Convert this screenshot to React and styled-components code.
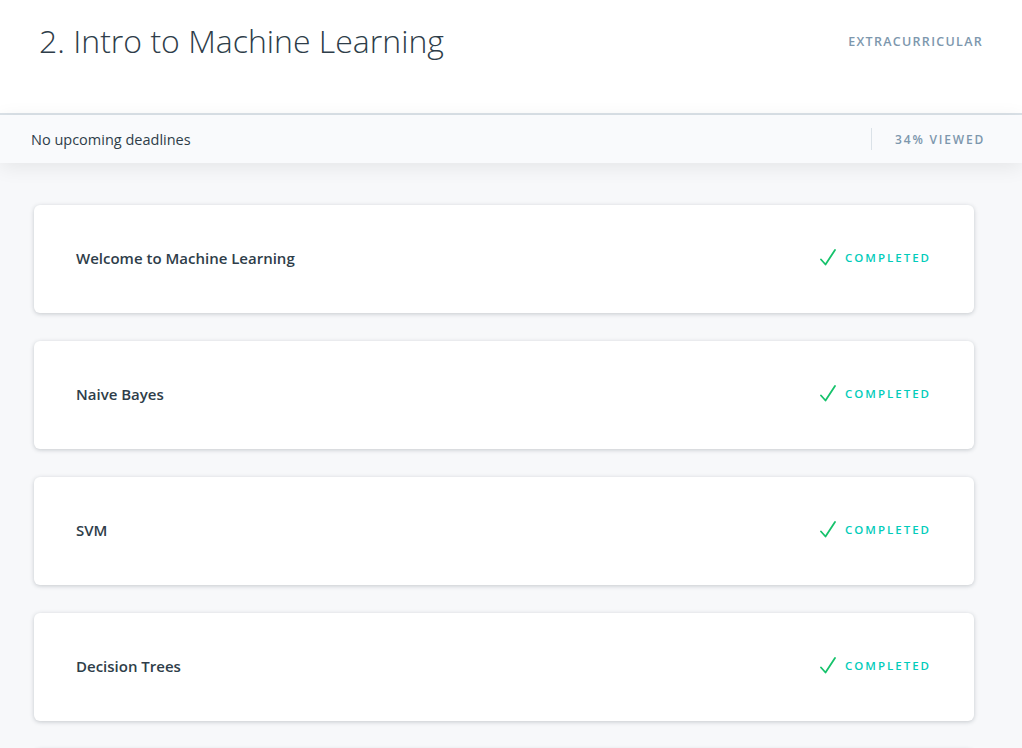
import styled, { createGlobalStyle } from 'styled-components';

const GlobalStyle = createGlobalStyle`
    html, body {
        margin: 0;
        padding: 0;
        background: #f7f8fa;
        font-family: 'Open Sans', 'Noto Sans', sans-serif;
        -webkit-font-smoothing: antialiased;
    }
`;

const Header = styled.header`
    height: 113px;
    background: #fff;
    border-bottom: 2px solid #dbe2e8;
    display: flex;
    justify-content: space-between;
    align-items: flex-start;
    padding: 0 39px 0 39px;
`;

const Title = styled.h1`
    margin: 19px 0 0;
    font-size: 32px;
    font-weight: 300;
    color: #2e3d49;
`;

const Tag = styled.span`
    margin-top: 33px;
    font-size: 12.5px;
    font-weight: 600;
    letter-spacing: 1.3px;
    color: #7d97ad;
    text-transform: uppercase;
`;

const SubBar = styled.div`
    height: 48px;
    background: #f9fafc;
    display: flex;
    align-items: center;
    padding: 0 37px 0 31px;
    box-shadow: 0 4px 20px rgba(0, 0, 0, 0.08);
    position: relative;
`;

const Deadline = styled.span`
    flex: 1;
    font-size: 14.5px;
    color: #2e3d49;
`;

const Viewed = styled.span`
    border-left: 1px solid #dbe2e8;
    padding-left: 23px;
    height: 22px;
    display: flex;
    align-items: center;
    font-size: 12px;
    font-weight: 600;
    letter-spacing: 1.8px;
    color: #7d97ad;
`;

const List = styled.main`
    display: flex;
    flex-direction: column;
    gap: 28px;
    padding: 42px 48px 40px 34px;
`;

const Card = styled.div`
    height: 108px;
    background: #fff;
    border-radius: 6px;
    box-shadow: 0 1px 4px rgba(46, 61, 73, 0.25);
    display: flex;
    align-items: center;
    justify-content: space-between;
    padding: 0 43px 0 42px;
`;

const CardTitle = styled.span`
    margin-top: -2px;
    font-size: 15px;
    font-weight: 600;
    color: #2e3d49;
`;

const Status = styled.span`
    display: flex;
    align-items: center;
    gap: 9px;
    margin-top: -4px;
    font-size: 11.5px;
    font-weight: 600;
    letter-spacing: 2px;
    color: #02ccba;
`;

const Check = () => (
    <svg width="16" height="18" viewBox="0 0 16 18" fill="none">
        <path d="M1 11.5 L5.5 16.5 L15 2" stroke="#15c26b" strokeWidth="1.8" strokeLinecap="round" strokeLinejoin="round" />
    </svg>
);

const lessons = ['Welcome to Machine Learning', 'Naive Bayes', 'SVM', 'Decision Trees', 'Choose Your Own Algorithm'];

const App = () => {
    return (
        <>
            <GlobalStyle />
            <Header>
                <Title>2. Intro to Machine Learning</Title>
                <Tag>Extracurricular</Tag>
            </Header>
            <SubBar>
                <Deadline>No upcoming deadlines</Deadline>
                <Viewed>34% VIEWED</Viewed>
            </SubBar>
            <List>
                {lessons.map((name) => (
                    <Card key={name}>
                        <CardTitle>{name}</CardTitle>
                        <Status>
                            <Check />
                            COMPLETED
                        </Status>
                    </Card>
                ))}
            </List>
        </>
    );
};

export default App;
